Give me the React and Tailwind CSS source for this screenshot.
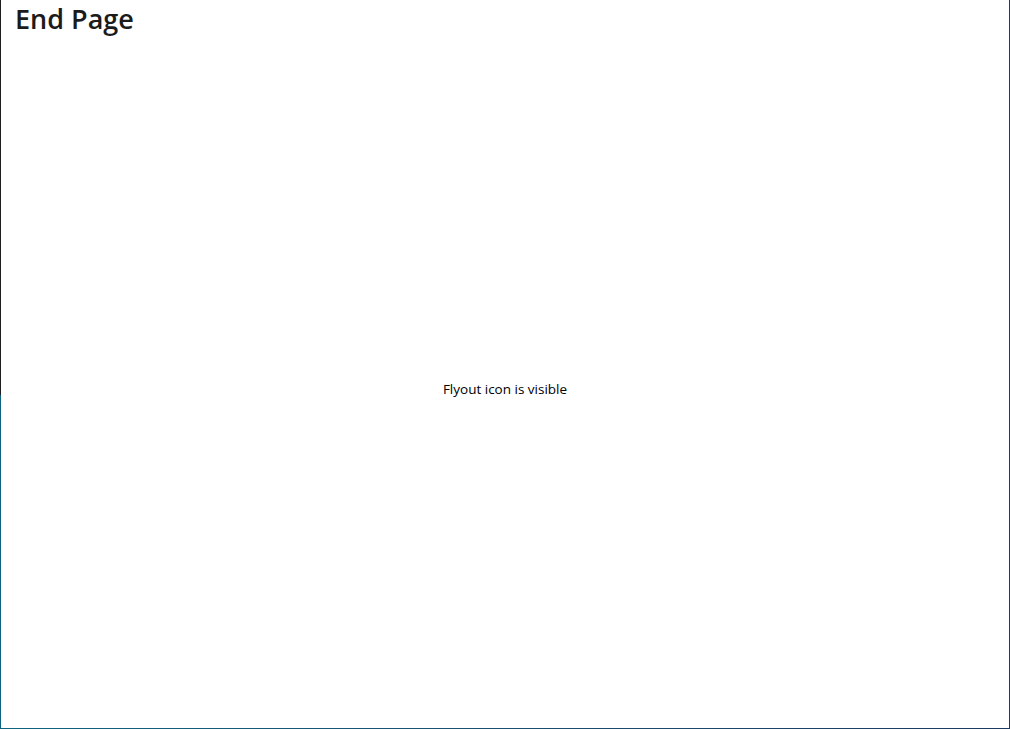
import React from 'react';

const App = () => {
    return (
        <div
            className="h-[729px] w-[1010px] flex bg-white overflow-hidden"
            style={{ fontFamily: '"Open Sans", "Noto Sans", sans-serif' }}
        >
            {/* Left window edge */}
            <div className="w-px flex flex-col">
                <div className="h-[395px] bg-[#1e1e1e]" />
                <div className="flex-1 bg-[#0e6480]" />
            </div>

            <div className="flex-1 flex flex-col">
                {/* Header */}
                <div className="h-12 px-[14px]">
                    <h1 className="text-[27px] leading-[37px] font-semibold text-[#1b1b1b]">End Page</h1>
                </div>

                {/* Content */}
                <div className="flex-1 flex items-center justify-center pt-[2px]">
                    <p className="text-[13.5px] text-black">Flyout icon is visible</p>
                </div>

                {/* Bottom window edge */}
                <div className="h-px bg-gradient-to-r from-[#0e6480] to-[#1c3a62]" />
            </div>

            {/* Right window edge */}
            <div className="w-px bg-[#1c3a62]" />
        </div>
    );
};

export default App;
